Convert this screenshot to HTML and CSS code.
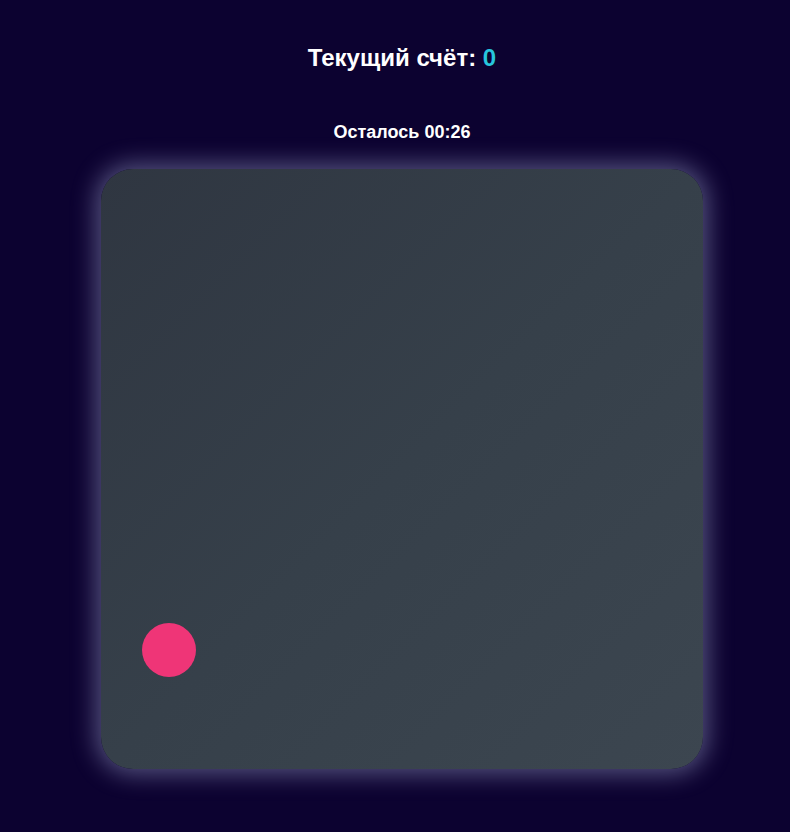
FILE: index.html
```html
<!DOCTYPE html>
<html lang="ru">
<head>
<meta charset="utf-8">
<title>Игра</title>
<link rel="stylesheet" href="styles.css">
</head>
<body>
<main class="game">
  <h1 class="score">Текущий счёт: <span class="score-value">0</span></h1>
  <p class="timer">Осталось 00:26</p>
  <div class="board">
    <div class="target"></div>
  </div>
</main>
</body>
</html>
```

FILE: styles.css
```css
html, body {
  margin: 0;
  height: 100%;
}
body {
  background: #0c0230;
  font-family: "Liberation Sans", Arial, sans-serif;
  color: #ffffff;
  overflow: hidden;
}
.game {
  display: flex;
  flex-direction: column;
  align-items: center;
  padding: 44px 0 0 14px;
}
.score {
  margin: 0;
  font-size: 24px;
  line-height: 28px;
  font-weight: 700;
}
.score-value {
  color: #27c6dd;
}
.timer {
  margin: 50px 0 0;
  font-size: 18px;
  line-height: 20px;
  font-weight: 700;
}
.board {
  margin-top: 27px;
  width: 602px;
  height: 600px;
  border-radius: 32px;
  background: linear-gradient(135deg, #2f3641 0%, #36404a 50%, #3c4650 100%);
  box-shadow: 0 0 24px 5px rgba(205, 215, 255, 0.38);
  display: flex;
  align-items: flex-end;
  padding: 0 0 92px 41px;
  box-sizing: border-box;
}
.target {
  width: 54px;
  height: 54px;
  border-radius: 50%;
  background: #ef3577;
}
```
